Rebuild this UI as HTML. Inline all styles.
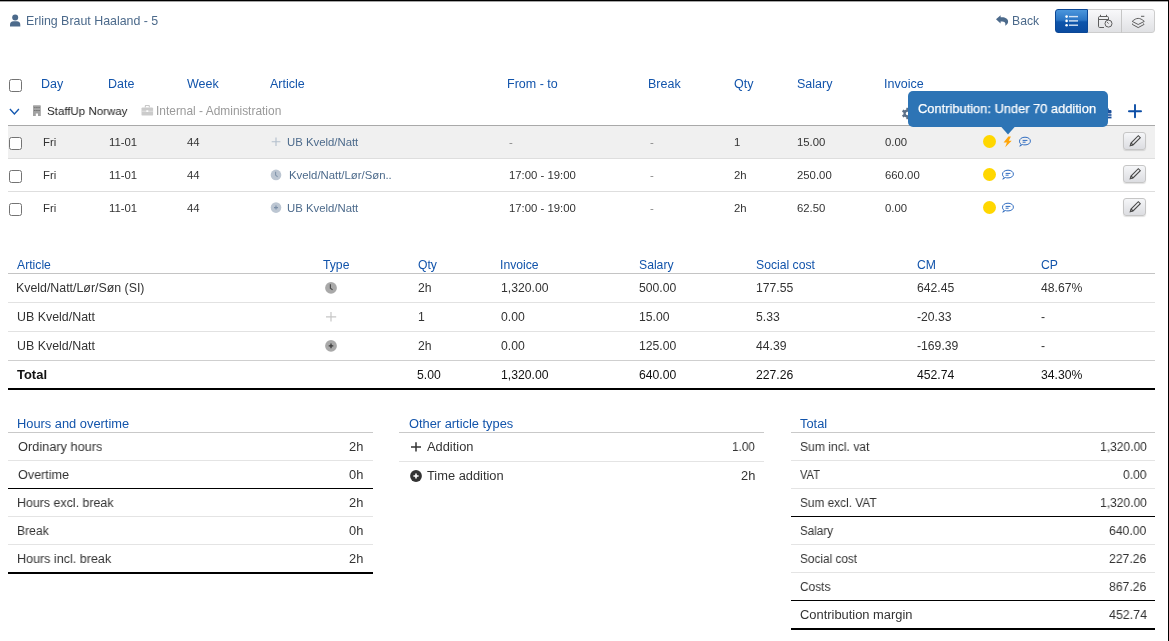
<!DOCTYPE html>
<html><head><meta charset="utf-8">
<style>
html,body{margin:0;padding:0;background:#fff;}
body{width:1169px;height:641px;position:relative;overflow:hidden;font-family:"Liberation Sans",sans-serif;}
.t{position:absolute;white-space:nowrap;line-height:1;will-change:transform;}
.a{position:absolute;}
.eb{width:22.3px;height:18.2px;box-sizing:border-box;border:1px solid #c6c6c6;border-radius:3px;background:linear-gradient(#f5f6f8,#dcdde1);box-shadow:0 1px 1px rgba(0,0,0,0.12);}
.cb{position:absolute;width:11px;height:11px;border:1px solid #737373;border-radius:2.5px;background:#fff;box-sizing:content-box;}
</style></head><body>
<!-- frame -->
<div class="a" style="left:0;top:0;width:1169px;height:1px;background:#000"></div>
<div class="a" style="left:0;top:1px;width:1169px;height:1px;background:rgba(0,0,0,0.35)"></div>
<div class="a" style="left:1168px;top:0;width:1px;height:641px;background:#000"></div>

<!-- person icon -->
<svg class="a" style="left:10px;top:14px" width="11" height="13" viewBox="0 0 11 13">
 <circle cx="5.2" cy="3.5" r="3" fill="#4c6a8b"/>
 <path d="M0 12.5 V11 Q0 7.3 3.6 7.3 H6.8 Q10.3 7.3 10.3 11 V12.5 Z" fill="#4c6a8b"/>
</svg>

<!-- back icon -->
<svg class="a" style="left:995px;top:14px" width="14" height="13" viewBox="0 0 14 13">
 <path d="M1 5.2 L5.6 1.2 V3.3 H7 C10.5 3.3 13.1 5 13.1 7.5 C13.1 9.5 11.8 11 10 11.8 C10.8 10.5 10.8 7.5 7.3 7.5 H5.6 V9.6 Z" fill="#4c6a8b"/>
</svg>

<!-- button group -->
<div class="a" style="left:1055px;top:9px;width:33px;height:24px;box-sizing:border-box;border:1px solid #0b4796;border-radius:3px 0 0 3px;background:linear-gradient(#4b96dc,#2a74c4 46%,#0e55ab 54%,#0a4ba0)"></div>
<div class="a" style="left:1088px;top:9px;width:34px;height:24px;box-sizing:border-box;border:1px solid #cdcdcd;border-left:none;background:linear-gradient(#f8f8fa,#e0e1e4)"></div>
<div class="a" style="left:1121px;top:9px;width:34px;height:24px;box-sizing:border-box;border:1px solid #cdcdcd;border-radius:0 3px 3px 0;background:linear-gradient(#f8f8fa,#e0e1e4)"></div>
<div class="a" style="left:1121px;top:9px;width:1px;height:24px;background:#c6c6c6"></div>
<svg class="a" style="left:1064px;top:14px" width="16" height="14" viewBox="0 0 16 14">
 <g fill="#fff"><circle cx="2.6" cy="2.6" r="1.3"/><circle cx="2.6" cy="6.9" r="1.3"/><circle cx="2.6" cy="11.2" r="1.3"/></g>
 <g fill="#d6e4f4"><rect x="5" y="1.9" width="9" height="1.4"/><rect x="5" y="6.2" width="9" height="1.4"/><rect x="5" y="10.5" width="9" height="1.4"/></g>
</svg>
<svg class="a" style="left:1096px;top:13px" width="17" height="16" viewBox="0 0 17 16">
 <g fill="none" stroke="#5e5e5e" stroke-width="1">
 <path d="M8 14.5 H3.7 Q2.5 14.5 2.5 13.3 V4.7 Q2.5 3.5 3.7 3.5 H11.3 Q12.5 3.5 12.5 4.7 V7"/>
 <path d="M2.5 6.5 H12.5"/><path d="M4.5 1.8 V4 M10.5 1.8 V4"/>
 <circle cx="12.5" cy="10.6" r="3.5" fill="#e9e9ec"/><path d="M12.5 10.6 L11.2 9.1"/>
 </g>
</svg>
<svg class="a" style="left:1131px;top:15px" width="15" height="14" viewBox="0 0 15 14">
 <g fill="none" stroke="#5e5e5e" stroke-width="1">
 <path d="M1.2 6.4 C3.5 4.4 5.2 3.4 7.2 3.4 C9.2 3.4 11 4.4 13.3 6.4 L7.2 9.5 Z"/><path d="M1.9 8.5 Q0.9 9 1.5 9.5 L7.2 12.6 L12.9 9.5 Q13.5 9 12.5 8.5"/><path d="M10 1.3 H13.3"/>
 </g>
</svg>

<!-- header checkbox -->
<div class="cb" style="left:9px;top:79px"></div>

<!-- chevron -->
<svg class="a" style="left:8px;top:107px" width="13" height="9" viewBox="0 0 13 9">
 <path d="M1.9 2.1 L6.4 6.9 L10.9 2.1" fill="none" stroke="#1458b0" stroke-width="1.4"/>
</svg>
<!-- building -->
<svg class="a" style="left:33px;top:105px" width="9" height="12" viewBox="0 0 9 12">
 <path d="M0 0.8 Q0 0.2 0.6 0.2 H7.2 Q7.8 0.2 7.8 0.8 V11 H5 V8.6 H2.8 V11 H0 Z" fill="#a2a2a2"/>
 <g fill="#6a6a6a"><rect x="1.2" y="2.2" width="1.3" height="1.1"/><rect x="3.3" y="2.2" width="1.3" height="1.1"/><rect x="5.4" y="2.2" width="1.3" height="1.1"/>
 <rect x="1.2" y="4.9" width="1.3" height="1.1"/><rect x="3.3" y="4.9" width="1.3" height="1.1"/><rect x="5.4" y="4.9" width="1.3" height="1.1"/></g>
 <rect x="0" y="3.7" width="7.8" height="0.6" fill="#bdbdbd"/>
</svg>
<!-- briefcase -->
<svg class="a" style="left:141px;top:105px" width="13" height="11" viewBox="0 0 13 11">
 <path d="M4.3 2.5 V1.2 Q4.3 0.4 5.1 0.4 H7.5 Q8.3 0.4 8.3 1.2 V2.5" fill="none" stroke="#c8c8c8" stroke-width="1.1"/>
 <rect x="0.5" y="2.4" width="11.6" height="8.2" rx="1.2" fill="#cbcbcb"/>
 <rect x="0.5" y="5.8" width="11.6" height="0.8" fill="#e6e6e6"/>
 <rect x="5.3" y="5.3" width="2" height="1.6" fill="#fff"/>
</svg>

<!-- gear (behind tooltip) -->
<svg class="a" style="left:901px;top:106.8px" width="13" height="13" viewBox="0 0 13 13">
 <g fill="#5d7189"><circle cx="6.5" cy="6.5" r="4"/>
 <g stroke="#5d7189" stroke-width="2.4" stroke-linecap="butt"><path d="M6.5 0.8 V12.2"/><path d="M1.6 3.6 L11.4 9.4"/><path d="M1.6 9.4 L11.4 3.6"/></g></g>
 <circle cx="6.5" cy="6.5" r="1.7" fill="#fff"/>
</svg>
<!-- icon right of tooltip -->
<svg class="a" style="left:1100px;top:108px" width="13" height="11" viewBox="0 0 13 11">
 <g fill="#1b4f9b"><rect x="5" y="2" width="6.5" height="3.5" rx="1"/><rect x="4" y="6.2" width="7.5" height="1.6"/><rect x="4" y="8.6" width="7.5" height="1.8"/><rect x="7" y="0.5" width="1.8" height="2"/></g>
</svg>
<!-- plus -->
<svg class="a" style="left:1127px;top:103px" width="16" height="16" viewBox="0 0 16 16">
 <path d="M8 1.95 V14.35 M1.95 8.2 H14.05" stroke="#0d4ea6" stroke-width="1.9" stroke-linecap="round"/>
</svg>

<!-- group row line and rows -->
<div class="a" style="left:8px;top:125px;width:1147px;height:1px;background:#a9a9a9"></div>
<div class="a" style="left:8px;top:126px;width:1147px;height:32.5px;background:#f0f0f0"></div>
<div class="a" style="left:8px;top:158px;width:1147px;height:1px;background:#dedede"></div>
<div class="a" style="left:8px;top:191px;width:1147px;height:1px;background:#dedede"></div>

<div class="cb" style="left:9px;top:137px"></div>
<div class="cb" style="left:9px;top:170px"></div>
<div class="cb" style="left:9px;top:203px"></div>

<!-- article icons -->
<svg class="a" style="left:270px;top:136px" width="12" height="12" viewBox="0 0 12 12">
 <path d="M6 1.4 V10 M1.7 5.7 H10.4" stroke="#b3bfcc" stroke-width="1.1"/>
</svg>
<svg class="a" style="left:270px;top:169px" width="12" height="12" viewBox="0 0 12 12">
 <circle cx="6" cy="5.9" r="5.3" fill="#bcc6d2"/>
 <path d="M5.6 2.8 V6.1 L7.6 7.8" fill="none" stroke="#8194ab" stroke-width="1.1"/>
</svg>
<svg class="a" style="left:270px;top:202px" width="12" height="12" viewBox="0 0 12 12">
 <circle cx="6" cy="5.6" r="5.3" fill="#bcc6d2"/>
 <path d="M6 3.6 V7.6 M4 5.6 H8" stroke="#7a8ea6" stroke-width="1.1"/>
</svg>

<!-- status icons -->
<div class="a" style="left:983.1px;top:134.6px;width:13.2px;height:13.2px;border-radius:50%;background:#ffd700"></div>
<div class="a" style="left:983.1px;top:167.6px;width:13.2px;height:13.2px;border-radius:50%;background:#ffd700"></div>
<div class="a" style="left:983.1px;top:200.6px;width:13.2px;height:13.2px;border-radius:50%;background:#ffd700"></div>
<svg class="a" style="left:1003px;top:136px" width="10" height="12" viewBox="0 0 10 12">
 <path d="M5.4 0.4 L7.9 0.6 L5.8 4.8 H8.7 L2.2 11.3 L3.9 6.6 H0.6 Z" fill="#ffa50a"/>
</svg>
<svg class="a" style="left:1018px;top:136px" width="13" height="11" viewBox="0 0 13 11">
 <path d="M3.2 8.3 C1.9 7.5 1.5 6.4 1.5 5.2 C1.5 2.8 3.9 1.2 7 1.2 C10.1 1.2 12.4 2.8 12.4 5.1 C12.4 7.4 10.1 8.9 7 8.9 C6 8.9 5.1 8.8 4.3 8.5 L1.8 10.2 Z" fill="none" stroke="#2f6cc0" stroke-width="1"/>
 <path d="M4.6 4.4 H9.4 M4.6 6.2 H7.6" stroke="#2f6cc0" stroke-width="1"/>
</svg>
<svg class="a" style="left:1001px;top:169px" width="13" height="11" viewBox="0 0 13 11">
 <path d="M3.2 8.3 C1.9 7.5 1.5 6.4 1.5 5.2 C1.5 2.8 3.9 1.2 7 1.2 C10.1 1.2 12.4 2.8 12.4 5.1 C12.4 7.4 10.1 8.9 7 8.9 C6 8.9 5.1 8.8 4.3 8.5 L1.8 10.2 Z" fill="none" stroke="#2f6cc0" stroke-width="1"/>
 <path d="M4.6 4.4 H9.4 M4.6 6.2 H7.6" stroke="#2f6cc0" stroke-width="1"/>
</svg>
<svg class="a" style="left:1001px;top:202px" width="13" height="11" viewBox="0 0 13 11">
 <path d="M3.2 8.3 C1.9 7.5 1.5 6.4 1.5 5.2 C1.5 2.8 3.9 1.2 7 1.2 C10.1 1.2 12.4 2.8 12.4 5.1 C12.4 7.4 10.1 8.9 7 8.9 C6 8.9 5.1 8.8 4.3 8.5 L1.8 10.2 Z" fill="none" stroke="#2f6cc0" stroke-width="1"/>
 <path d="M4.6 4.4 H9.4 M4.6 6.2 H7.6" stroke="#2f6cc0" stroke-width="1"/>
</svg>

<!-- edit buttons -->
<div class="a eb" style="left:1123.4px;top:132.2px"></div>
<div class="a eb" style="left:1123.4px;top:165.2px"></div>
<div class="a eb" style="left:1123.4px;top:198.2px"></div>

<!-- summary table -->
<div class="a" style="left:8px;top:273px;width:1147px;height:1px;background:#c4c4c4"></div>
<div class="a" style="left:8px;top:302px;width:1147px;height:1px;background:#e2e2e2"></div>
<div class="a" style="left:8px;top:331px;width:1147px;height:1px;background:#e2e2e2"></div>
<div class="a" style="left:8px;top:360px;width:1147px;height:1px;background:#cfcfcf"></div>
<div class="a" style="left:8px;top:387.5px;width:1147px;height:2px;background:#000"></div>
<svg class="a" style="left:324px;top:280.5px" width="14" height="14" viewBox="0 0 14 14">
 <circle cx="7" cy="6.9" r="5.9" fill="#a9a9a9"/>
 <path d="M6.4 3.3 V7.2 L8.6 8.9" fill="none" stroke="#4a4a4a" stroke-width="1.2"/>
</svg>
<svg class="a" style="left:324px;top:309.5px" width="14" height="14" viewBox="0 0 14 14">
 <path d="M7 1.9 V11.6 M2 6.8 H12.2" stroke="#c6c6c6" stroke-width="1.2"/>
</svg>
<svg class="a" style="left:324px;top:338.5px" width="14" height="14" viewBox="0 0 14 14">
 <circle cx="7" cy="6.9" r="5.9" fill="#a9a9a9"/>
 <path d="M7 4.6 V9.2 M4.7 6.9 H9.3" stroke="#3a3a3a" stroke-width="1.3"/>
</svg>

<!-- bottom panels -->
<div class="a" style="left:8px;top:432px;width:365px;height:1px;background:#c9c9c9"></div>
<div class="a" style="left:8px;top:460px;width:365px;height:1px;background:#e4e4e4"></div>
<div class="a" style="left:8px;top:488px;width:365px;height:1px;background:#000"></div>
<div class="a" style="left:8px;top:516px;width:365px;height:1px;background:#e4e4e4"></div>
<div class="a" style="left:8px;top:544px;width:365px;height:1px;background:#e4e4e4"></div>
<div class="a" style="left:8px;top:571.5px;width:365px;height:2px;background:#000"></div>

<div class="a" style="left:399px;top:432px;width:365px;height:1px;background:#c9c9c9"></div>
<div class="a" style="left:399px;top:461px;width:365px;height:1px;background:#e4e4e4"></div>
<svg class="a" style="left:409px;top:439.5px" width="14" height="14" viewBox="0 0 14 14">
 <path d="M7 2.3 V11.5 M2 6.9 H12" stroke="#333" stroke-width="1.5"/>
</svg>
<svg class="a" style="left:409px;top:468.5px" width="14" height="14" viewBox="0 0 14 14">
 <circle cx="7" cy="7" r="5.9" fill="#333"/>
 <path d="M7 4.4 V9.6 M4.4 7 H9.6" stroke="#fff" stroke-width="1.6"/>
</svg>

<div class="a" style="left:791px;top:432px;width:364px;height:1px;background:#c9c9c9"></div>
<div class="a" style="left:791px;top:460px;width:364px;height:1px;background:#e4e4e4"></div>
<div class="a" style="left:791px;top:488px;width:364px;height:1px;background:#e4e4e4"></div>
<div class="a" style="left:791px;top:516px;width:364px;height:1px;background:#000"></div>
<div class="a" style="left:791px;top:544px;width:364px;height:1px;background:#e4e4e4"></div>
<div class="a" style="left:791px;top:572px;width:364px;height:1px;background:#e4e4e4"></div>
<div class="a" style="left:791px;top:600px;width:364px;height:1px;background:#000"></div>
<div class="a" style="left:791px;top:627.5px;width:364px;height:2px;background:#000"></div>

<!-- tooltip -->
<div class="a" style="left:908px;top:91.2px;width:199.7px;height:35.4px;border-radius:5px;background:#2d74b5"></div>
<svg class="a" style="left:999px;top:126px" width="18" height="10" viewBox="0 0 18 10">
 <path d="M1.5 0 L9 8.6 L16.5 0 Z" fill="#2d74b5"/>
</svg>
<!-- pencils -->
<svg class="a" style="left:1128px;top:134px" width="14" height="14" viewBox="0 0 14 14">
 <g fill="none" stroke="#4a4a4a" stroke-width="1.1"><path d="M2.2 11.8 L3 9 L10.3 1.7 L12.3 3.7 L5 11 Z"/><path d="M3 9 L5 11"/></g>
</svg>
<svg class="a" style="left:1128px;top:167px" width="14" height="14" viewBox="0 0 14 14">
 <g fill="none" stroke="#4a4a4a" stroke-width="1.1"><path d="M2.2 11.8 L3 9 L10.3 1.7 L12.3 3.7 L5 11 Z"/><path d="M3 9 L5 11"/></g>
</svg>
<svg class="a" style="left:1128px;top:200px" width="14" height="14" viewBox="0 0 14 14">
 <g fill="none" stroke="#4a4a4a" stroke-width="1.1"><path d="M2.2 11.8 L3 9 L10.3 1.7 L12.3 3.7 L5 11 Z"/><path d="M3 9 L5 11"/></g>
</svg>

<div class="t" style="left:25.70px;top:15.00px;font-size:12.4px;color:#4c6a8b">Erling Braut Haaland - 5</div>
<div class="t" style="left:1012.10px;top:15.00px;font-size:12.2px;color:#4c6a8b">Back</div>
<div class="t" style="left:41.40px;top:78.00px;font-size:12.5px;color:#1254ab">Day</div>
<div class="t" style="left:107.50px;top:78.00px;font-size:12.5px;color:#1254ab">Date</div>
<div class="t" style="left:187.00px;top:78.00px;font-size:12.5px;color:#1254ab">Week</div>
<div class="t" style="left:269.60px;top:78.00px;font-size:12.5px;color:#1254ab">Article</div>
<div class="t" style="left:507.20px;top:78.00px;font-size:12.5px;color:#1254ab">From - to</div>
<div class="t" style="left:648.10px;top:78.00px;font-size:12.5px;color:#1254ab">Break</div>
<div class="t" style="left:733.60px;top:78.00px;font-size:12.5px;color:#1254ab">Qty</div>
<div class="t" style="left:797.20px;top:78.00px;font-size:12.5px;color:#1254ab">Salary</div>
<div class="t" style="left:884.00px;top:78.00px;font-size:12.5px;color:#1254ab">Invoice</div>
<div class="t" style="left:46.50px;top:106.00px;font-size:11.8px;color:#222;transform:scaleX(0.9758);transform-origin:0 0">StaffUp Norway</div>
<div class="t" style="left:156.10px;top:106.00px;font-size:11.9px;color:#9a9a9a;transform:scaleX(1.0028);transform-origin:0 0">Internal - Administration</div>
<div class="t" style="left:42.60px;top:137.00px;font-size:11.35px;color:#333">Fri</div>
<div class="t" style="left:109.00px;top:137.00px;font-size:11.35px;color:#333">11-01</div>
<div class="t" style="left:187.00px;top:137.00px;font-size:11.35px;color:#333">44</div>
<div class="t" style="left:286.50px;top:137.00px;font-size:11.35px;color:#4c6a8b">UB Kveld/Natt</div>
<div class="t" style="left:508.50px;top:137.00px;font-size:11.35px;color:#888">-</div>
<div class="t" style="left:650.00px;top:137.00px;font-size:11.35px;color:#888">-</div>
<div class="t" style="left:733.60px;top:137.00px;font-size:11.35px;color:#333">1</div>
<div class="t" style="left:797.00px;top:137.00px;font-size:11.35px;color:#333">15.00</div>
<div class="t" style="left:885.00px;top:137.00px;font-size:11.35px;color:#333">0.00</div>
<div class="t" style="left:42.60px;top:170.00px;font-size:11.35px;color:#333">Fri</div>
<div class="t" style="left:109.00px;top:170.00px;font-size:11.35px;color:#333">11-01</div>
<div class="t" style="left:187.00px;top:170.00px;font-size:11.35px;color:#333">44</div>
<div class="t" style="left:289.30px;top:170.00px;font-size:11.35px;color:#4c6a8b">Kveld/Natt/Lør/Søn..</div>
<div class="t" style="left:508.50px;top:170.00px;font-size:11.35px;color:#333">17:00 - 19:00</div>
<div class="t" style="left:650.00px;top:170.00px;font-size:11.35px;color:#888">-</div>
<div class="t" style="left:733.60px;top:170.00px;font-size:11.35px;color:#333">2h</div>
<div class="t" style="left:797.00px;top:170.00px;font-size:11.35px;color:#333">250.00</div>
<div class="t" style="left:885.00px;top:170.00px;font-size:11.35px;color:#333">660.00</div>
<div class="t" style="left:42.60px;top:203.00px;font-size:11.35px;color:#333">Fri</div>
<div class="t" style="left:109.00px;top:203.00px;font-size:11.35px;color:#333">11-01</div>
<div class="t" style="left:187.00px;top:203.00px;font-size:11.35px;color:#333">44</div>
<div class="t" style="left:286.50px;top:203.00px;font-size:11.35px;color:#4c6a8b">UB Kveld/Natt</div>
<div class="t" style="left:508.50px;top:203.00px;font-size:11.35px;color:#333">17:00 - 19:00</div>
<div class="t" style="left:650.00px;top:203.00px;font-size:11.35px;color:#888">-</div>
<div class="t" style="left:733.60px;top:203.00px;font-size:11.35px;color:#333">2h</div>
<div class="t" style="left:797.00px;top:203.00px;font-size:11.35px;color:#333">62.50</div>
<div class="t" style="left:885.00px;top:203.00px;font-size:11.35px;color:#333">0.00</div>
<div class="t" style="left:17.40px;top:259.00px;font-size:12.2px;color:#1254ab">Article</div>
<div class="t" style="left:323.30px;top:259.00px;font-size:12.2px;color:#1254ab">Type</div>
<div class="t" style="left:418.00px;top:259.00px;font-size:12.2px;color:#1254ab">Qty</div>
<div class="t" style="left:500.20px;top:259.00px;font-size:12.2px;color:#1254ab">Invoice</div>
<div class="t" style="left:638.70px;top:259.00px;font-size:12.2px;color:#1254ab">Salary</div>
<div class="t" style="left:755.80px;top:259.00px;font-size:12.2px;color:#1254ab">Social cost</div>
<div class="t" style="left:916.90px;top:259.00px;font-size:12.2px;color:#1254ab">CM</div>
<div class="t" style="left:1040.90px;top:259.00px;font-size:12.2px;color:#1254ab">CP</div>
<div class="t" style="left:16.39px;top:282.00px;font-size:12.2px;color:#333;transform:scaleX(1.0144);transform-origin:0 0">Kveld/Natt/Lør/Søn (SI)</div>
<div class="t" style="left:418.00px;top:282.00px;font-size:12.2px;color:#333">2h</div>
<div class="t" style="left:501.20px;top:282.00px;font-size:12.2px;color:#333">1,320.00</div>
<div class="t" style="left:638.70px;top:282.00px;font-size:12.2px;color:#333">500.00</div>
<div class="t" style="left:755.80px;top:282.00px;font-size:12.2px;color:#333">177.55</div>
<div class="t" style="left:916.90px;top:282.00px;font-size:12.2px;color:#333">642.45</div>
<div class="t" style="left:1040.90px;top:282.00px;font-size:12.2px;color:#333">48.67%</div>
<div class="t" style="left:17.40px;top:311.00px;font-size:12.2px;color:#333;transform:scaleX(1.0187);transform-origin:0 0">UB Kveld/Natt</div>
<div class="t" style="left:418.00px;top:311.00px;font-size:12.2px;color:#333">1</div>
<div class="t" style="left:501.20px;top:311.00px;font-size:12.2px;color:#333">0.00</div>
<div class="t" style="left:638.70px;top:311.00px;font-size:12.2px;color:#333">15.00</div>
<div class="t" style="left:755.80px;top:311.00px;font-size:12.2px;color:#333">5.33</div>
<div class="t" style="left:916.90px;top:311.00px;font-size:12.2px;color:#333">-20.33</div>
<div class="t" style="left:1040.90px;top:311.00px;font-size:12.2px;color:#333">-</div>
<div class="t" style="left:17.40px;top:340.00px;font-size:12.2px;color:#333;transform:scaleX(1.0187);transform-origin:0 0">UB Kveld/Natt</div>
<div class="t" style="left:418.00px;top:340.00px;font-size:12.2px;color:#333">2h</div>
<div class="t" style="left:501.20px;top:340.00px;font-size:12.2px;color:#333">0.00</div>
<div class="t" style="left:638.70px;top:340.00px;font-size:12.2px;color:#333">125.00</div>
<div class="t" style="left:755.80px;top:340.00px;font-size:12.2px;color:#333">44.39</div>
<div class="t" style="left:916.90px;top:340.00px;font-size:12.2px;color:#333">-169.39</div>
<div class="t" style="left:1040.90px;top:340.00px;font-size:12.2px;color:#333">-</div>
<div class="t" style="left:16.90px;top:369.00px;font-size:12.5px;color:#111;font-weight:bold;transform:scaleX(1.0366);transform-origin:0 0">Total</div>
<div class="t" style="left:417.00px;top:369.00px;font-size:12.2px;color:#111">5.00</div>
<div class="t" style="left:501.20px;top:369.00px;font-size:12.2px;color:#111">1,320.00</div>
<div class="t" style="left:638.70px;top:369.00px;font-size:12.2px;color:#111">640.00</div>
<div class="t" style="left:755.80px;top:369.00px;font-size:12.2px;color:#111">227.26</div>
<div class="t" style="left:916.90px;top:369.00px;font-size:12.2px;color:#111">452.74</div>
<div class="t" style="left:1040.90px;top:369.00px;font-size:12.2px;color:#111">34.30%</div>
<div class="t" style="left:16.80px;top:418.00px;font-size:12.85px;color:#1254ab">Hours and overtime</div>
<div class="t" style="left:17.80px;top:441.00px;font-size:12.85px;color:#333;transform:scaleX(0.9938);transform-origin:0 0">Ordinary hours</div>
<div class="t" style="left:349.46px;top:441.00px;font-size:12.85px;color:#333">2h</div>
<div class="t" style="left:17.80px;top:469.00px;font-size:12.85px;color:#333;transform:scaleX(0.9797);transform-origin:0 0">Overtime</div>
<div class="t" style="left:349.46px;top:469.00px;font-size:12.85px;color:#333">0h</div>
<div class="t" style="left:16.83px;top:497.00px;font-size:12.85px;color:#333;transform:scaleX(0.9657);transform-origin:0 0">Hours excl. break</div>
<div class="t" style="left:349.46px;top:497.00px;font-size:12.85px;color:#333">2h</div>
<div class="t" style="left:16.86px;top:525.00px;font-size:12.85px;color:#333;transform:scaleX(0.9448);transform-origin:0 0">Break</div>
<div class="t" style="left:349.46px;top:525.00px;font-size:12.85px;color:#333">0h</div>
<div class="t" style="left:16.82px;top:553.00px;font-size:12.85px;color:#333;transform:scaleX(0.9766);transform-origin:0 0">Hours incl. break</div>
<div class="t" style="left:349.46px;top:553.00px;font-size:12.85px;color:#333">2h</div>
<div class="t" style="left:408.70px;top:418.00px;font-size:12.85px;color:#1254ab">Other article types</div>
<div class="t" style="left:426.70px;top:441.00px;font-size:12.85px;color:#333">Addition</div>
<div class="t" style="left:732.20px;top:441.00px;font-size:12.85px;color:#333;transform:scaleX(0.9173);transform-origin:0 0">1.00</div>
<div class="t" style="left:426.70px;top:470.00px;font-size:12.85px;color:#333">Time addition</div>
<div class="t" style="left:740.86px;top:470.00px;font-size:12.85px;color:#333">2h</div>
<div class="t" style="left:800.10px;top:418.00px;font-size:12.85px;color:#1254ab">Total</div>
<div class="t" style="left:800.10px;top:441.00px;font-size:12.85px;color:#333;transform:scaleX(0.9439);transform-origin:0 0">Sum incl. vat</div>
<div class="t" style="left:1099.50px;top:441.00px;font-size:12.85px;color:#333;transform:scaleX(0.9388);transform-origin:0 0">1,320.00</div>
<div class="t" style="left:800.10px;top:469.00px;font-size:12.85px;color:#333;transform:scaleX(0.8654);transform-origin:0 0">VAT</div>
<div class="t" style="left:1122.90px;top:469.00px;font-size:12.85px;color:#333;transform:scaleX(0.9415);transform-origin:0 0">0.00</div>
<div class="t" style="left:800.10px;top:497.00px;font-size:12.85px;color:#333;transform:scaleX(0.9221);transform-origin:0 0">Sum excl. VAT</div>
<div class="t" style="left:1099.50px;top:497.00px;font-size:12.85px;color:#333;transform:scaleX(0.9388);transform-origin:0 0">1,320.00</div>
<div class="t" style="left:800.10px;top:525.00px;font-size:12.85px;color:#333;transform:scaleX(0.9058);transform-origin:0 0">Salary</div>
<div class="t" style="left:1109.20px;top:525.00px;font-size:12.85px;color:#333;transform:scaleX(0.9479);transform-origin:0 0">640.00</div>
<div class="t" style="left:800.10px;top:553.00px;font-size:12.85px;color:#333;transform:scaleX(0.9195);transform-origin:0 0">Social cost</div>
<div class="t" style="left:1109.20px;top:553.00px;font-size:12.85px;color:#333;transform:scaleX(0.9479);transform-origin:0 0">227.26</div>
<div class="t" style="left:800.10px;top:581.00px;font-size:12.85px;color:#333;transform:scaleX(0.9257);transform-origin:0 0">Costs</div>
<div class="t" style="left:1109.20px;top:581.00px;font-size:12.85px;color:#333;transform:scaleX(0.9479);transform-origin:0 0">867.26</div>
<div class="t" style="left:800.10px;top:609.00px;font-size:12.85px;color:#333;transform:scaleX(1.0041);transform-origin:0 0">Contribution margin</div>
<div class="t" style="left:1108.50px;top:609.00px;font-size:12.85px;color:#333;transform:scaleX(0.9657);transform-origin:0 0">452.74</div>
<div class="t" style="left:918.40px;top:103.00px;font-size:12.95px;color:#fff;-webkit-text-stroke:0.25px #fff;transform:scaleX(0.9939);transform-origin:0 0">Contribution: Under 70 addition</div>
</body></html>
